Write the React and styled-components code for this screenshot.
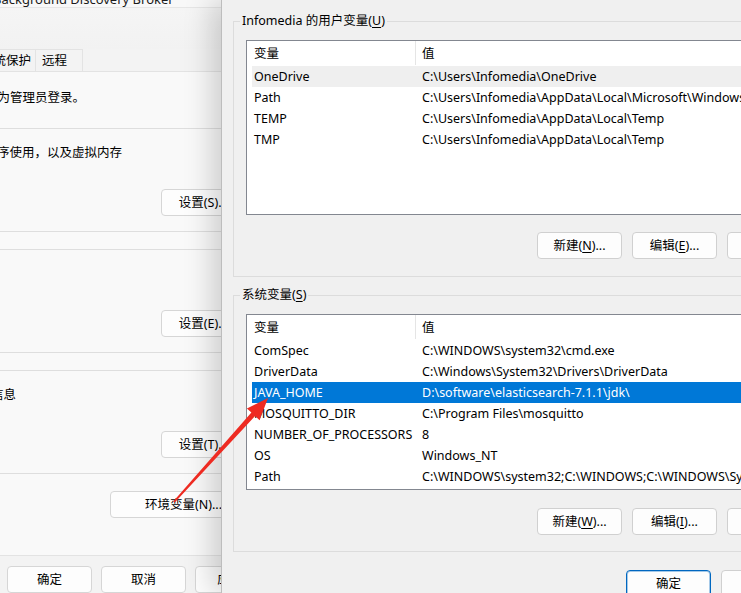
import styled, { createGlobalStyle } from 'styled-components';

const GlobalStyle = createGlobalStyle`
  html, body {
    margin: 0;
    padding: 0;
  }
  body {
    width: 741px;
    height: 593px;
    overflow: hidden;
    background: #f0f0f0;
    font-family: "Noto Sans", "Noto Sans CJK SC", sans-serif;
    font-size: 12.5px;
    color: #000;
  }
  * {
    box-sizing: border-box;
  }
`;

const userVars = [
  { name: 'OneDrive', value: 'C:\\Users\\Infomedia\\OneDrive', hover: true },
  { name: 'Path', value: 'C:\\Users\\Infomedia\\AppData\\Local\\Microsoft\\WindowsApps;' },
  { name: 'TEMP', value: 'C:\\Users\\Infomedia\\AppData\\Local\\Temp' },
  { name: 'TMP', value: 'C:\\Users\\Infomedia\\AppData\\Local\\Temp' },
];

const systemVars = [
  { name: 'ComSpec', value: 'C:\\WINDOWS\\system32\\cmd.exe' },
  { name: 'DriverData', value: 'C:\\Windows\\System32\\Drivers\\DriverData' },
  { name: 'JAVA_HOME', value: 'D:\\software\\elasticsearch-7.1.1\\jdk\\', selected: true },
  { name: 'MOSQUITTO_DIR', value: 'C:\\Program Files\\mosquitto' },
  { name: 'NUMBER_OF_PROCESSORS', value: '8' },
  { name: 'OS', value: 'Windows_NT' },
  { name: 'Path', value: 'C:\\WINDOWS\\system32;C:\\WINDOWS;C:\\WINDOWS\\System32\\Wbem;' },
];

const VarList = ({ rows, height }) => (
  <ListBox $h={height}>
    <ListHeader>
      <HeadCell $w={168}>变量</HeadCell>
      <HeadDivider />
      <HeadCell>值</HeadCell>
    </ListHeader>
    {rows.map((r, i) => (
      <ListRow key={i} $hover={r.hover} $selected={r.selected}>
        <NameCell>{r.name}</NameCell>
        <ValueCell>{r.value}</ValueCell>
      </ListRow>
    ))}
  </ListBox>
);

export default function App() {
  return (
    <>
      <GlobalStyle />
      <Screen>
        <LeftWindow>
          <TitleStrip>
            <TitleText>Background Discovery Broker</TitleText>
          </TitleStrip>
          <TopArea />
          <TabStrip>
            <Tab $pr={4}>系统保护</Tab>
            <Tab $pr={15}>远程</Tab>
          </TabStrip>
          <TabPage>
            <Note $shift={-165} $mb={3}>要进行大多数更改，你必须作为管理员登录。</Note>
            <Group>
              <Note $shift={-153}>视觉效果，处理器计划，程序使用，以及虚拟内存</Note>
              <ButtonRow $pr={24}>
                <Button $w={85}>设置(S)...</Button>
              </ButtonRow>
            </Group>
            <Group>
              <Note>&nbsp;</Note>
              <ButtonRow $pr={24}>
                <Button $w={85}>设置(E)...</Button>
              </ButtonRow>
            </Group>
            <Group>
              <Note $shift={-159}>系统启动、系统故障和调试信息</Note>
              <ButtonRow $pr={24}>
                <Button $w={85}>设置(T)...</Button>
              </ButtonRow>
            </Group>
            <EnvRow>
              <Button $w={147}>环境变量(N)...</Button>
            </EnvRow>
          </TabPage>
          <LeftFooter>
            <Button $w={85}>确定</Button>
            <Button $w={85}>取消</Button>
            <Button $w={85}>应用(A)</Button>
          </LeftFooter>
        </LeftWindow>

        <Dialog>
          <DialogInner>
            <GroupBox>
              <Legend>
                Infomedia 的用户变量(<u>U</u>)
              </Legend>
              <VarList rows={userVars} height={175} />
              <GroupButtons $mt={17}>
                <DlgButton>新建(<u>N</u>)...</DlgButton>
                <DlgButton>编辑(<u>E</u>)...</DlgButton>
                <DlgButton>删除(<u>D</u>)</DlgButton>
              </GroupButtons>
            </GroupBox>
            <GroupBox $mt={10} $pb={16}>
              <Legend>
                系统变量(<u>S</u>)
              </Legend>
              <VarList rows={systemVars} height={176} />
              <GroupButtons $mt={18}>
                <DlgButton>新建(<u>W</u>)...</DlgButton>
                <DlgButton>编辑(<u>I</u>)...</DlgButton>
                <DlgButton>删除(<u>L</u>)</DlgButton>
              </GroupButtons>
            </GroupBox>
            <DialogFooter>
              <DlgButton $default>确定</DlgButton>
              <DlgButton>取消</DlgButton>
            </DialogFooter>
          </DialogInner>
        </Dialog>

        <Arrow viewBox="0 0 741 593" width="741" height="593">
          <polygon
            fill="#ee2b22"
            points="174.8,502.6 255.1,416.0 259.6,420.2 268,398 246.9,408.6 251.4,412.6 173.2,501.4"
          />
        </Arrow>
      </Screen>
    </>
  );
}

const Screen = styled.div`
  position: relative;
  display: flex;
  width: 741px;
  height: 593px;
  overflow: hidden;
`;

/* ---------- left window (system properties) ---------- */

const LeftWindow = styled.div`
  flex: none;
  width: 221px;
  height: 593px;
  overflow: hidden;
  display: flex;
  flex-direction: column;
  background: #f3f3f3;
`;

const TitleStrip = styled.div`
  flex: none;
  height: 8px;
  overflow: hidden;
  background: #f8f8f8;
  border-bottom: 1px solid #e6e6e6;
`;

const TitleText = styled.div`
  margin: -8px 0 0 -7px;
  font-size: 13px;
  line-height: 14px;
  color: #1b1b1b;
  white-space: nowrap;
`;

const TopArea = styled.div`
  flex: none;
  height: 41px;
  background: linear-gradient(#f5f5f5, #f2f2f2);
`;

const TabStrip = styled.div`
  flex: none;
  display: flex;
  height: 22px;
  margin-left: -26px;
`;

const Tab = styled.div`
  height: 22px;
  padding: 0 ${(p) => p.$pr}px 0 6px;
  border: 1px solid #e3e3e3;
  border-bottom: none;
  margin-right: -1px;
  line-height: 21px;
  white-space: nowrap;
  background: #f3f3f3;
`;

const TabPage = styled.div`
  flex: none;
  height: 485px;
  width: 270px;
  background: #f9f9f9;
  border-top: 1px solid #e3e3e3;
  border-bottom: 1px solid #e3e3e3;
  padding-top: 16px;
  display: flex;
  flex-direction: column;
  gap: 17px;
`;

const Note = styled.div`
  height: 20px;
  line-height: 20px;
  margin-left: ${(p) => p.$shift || 0}px;
  margin-bottom: ${(p) => p.$mb || 0}px;
  white-space: nowrap;
`;

const Group = styled.div`
  display: flex;
  flex-direction: column;
  border-top: 1px solid #dedede;
  border-bottom: 1px solid #dedede;
  padding: 14px 0 15px;
`;

const ButtonRow = styled.div`
  display: flex;
  justify-content: flex-end;
  margin-top: 26px;
  padding-right: ${(p) => p.$pr}px;
`;

const EnvRow = styled.div`
  display: flex;
  padding-left: 110px;
`;

const Button = styled.div`
  flex: none;
  width: ${(p) => p.$w}px;
  height: 27px;
  display: flex;
  align-items: center;
  justify-content: center;
  white-space: nowrap;
  background: #fdfdfd;
  border: 1px solid #d6d6d6;
  border-radius: 4px;
  line-height: 16px;
`;

const LeftFooter = styled.div`
  flex: none;
  display: flex;
  gap: 9px;
  padding: 10px 0 0 7px;
`;

/* ---------- right dialog (environment variables) ---------- */

const Dialog = styled.div`
  position: relative;
  flex: none;
  width: 520px;
  height: 593px;
  overflow: hidden;
  background: #f0f0f0;
  border-left: 1px solid #bdbdbd;
  box-shadow: -10px 0 26px rgba(0, 0, 0, 0.17);
`;

const DialogInner = styled.div`
  width: 621px;
  padding-top: 13px;
  display: flex;
  flex-direction: column;
`;

const GroupBox = styled.fieldset`
  margin: ${(p) => p.$mt || 0}px 12px 0 11px;
  padding: 11px 12px ${(p) => p.$pb || 17}px 12px;
  border: 1px solid #dcdcdc;
  min-width: 0;
`;

const Legend = styled.legend`
  margin-left: -6px;
  padding: 0 2px;
  line-height: 16px;
  height: 16px;
  white-space: nowrap;
  u {
    text-underline-offset: 2px;
  }
`;

const ListBox = styled.div`
  height: ${(p) => p.$h}px;
  background: #fff;
  border: 1px solid #838790;
  overflow: hidden;
`;

const ListHeader = styled.div`
  display: flex;
  align-items: stretch;
  height: 25px;
`;

const HeadCell = styled.div`
  flex: none;
  width: ${(p) => (p.$w ? `${p.$w}px` : 'auto')};
  padding-left: ${(p) => (p.$w ? 7 : 6)}px;
  line-height: 25px;
`;

const HeadDivider = styled.div`
  flex: none;
  width: 1px;
  height: 24px;
  background: #e5e5e5;
`;

const ListRow = styled.div`
  display: flex;
  height: 21px;
  margin-left: 5px;
  line-height: 21px;
  white-space: nowrap;
  background: ${(p) => (p.$selected ? '#0078d7' : p.$hover ? '#efefef' : 'transparent')};
  color: ${(p) => (p.$selected ? '#fff' : '#000')};
`;

const NameCell = styled.div`
  flex: none;
  width: 168px;
  padding-left: 2px;
`;

const ValueCell = styled.div`
  padding-left: 2px;
`;

const GroupButtons = styled.div`
  display: flex;
  justify-content: flex-end;
  gap: 10px;
  margin-top: ${(p) => p.$mt}px;
  padding-right: 6px;
`;

const DlgButton = styled.div`
  flex: none;
  width: 85px;
  height: 27px;
  display: flex;
  align-items: center;
  justify-content: center;
  white-space: nowrap;
  line-height: 16px;
  background: #fdfdfd;
  border: 1px solid ${(p) => (p.$default ? '#0067c0' : '#d0d0d0')};
  box-shadow: ${(p) => (p.$default ? 'inset 0 0 0 1px rgba(0, 103, 192, 0.35)' : 'none')};
  border-radius: 4px;
  u {
    text-underline-offset: 2px;
  }
`;

const DialogFooter = styled.div`
  display: flex;
  gap: 10px;
  margin-top: 18px;
  padding-left: 404px;
`;

const Arrow = styled.svg`
  position: absolute;
  left: 0;
  top: 0;
  pointer-events: none;
`;
